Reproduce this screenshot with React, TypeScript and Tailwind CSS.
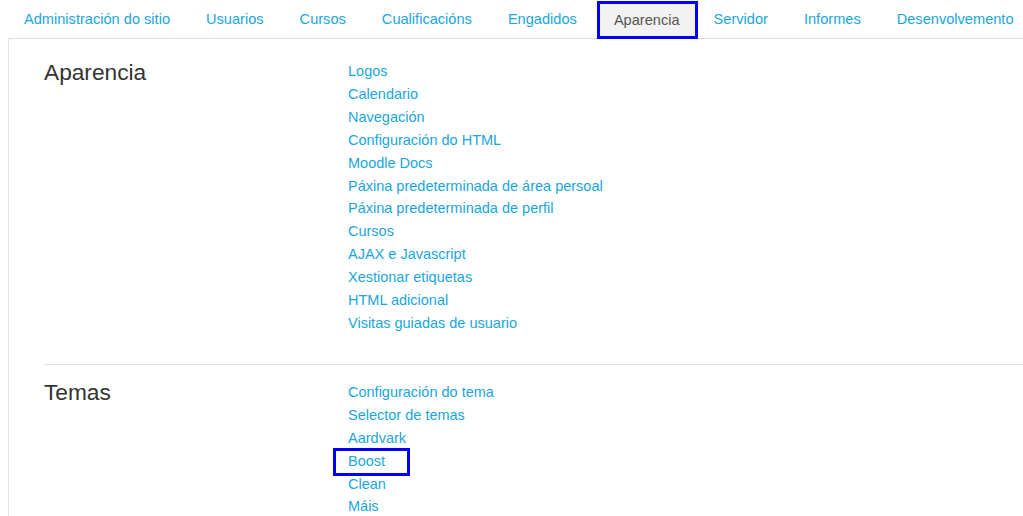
import React from "react";

const tabs = [
  "Administración do sitio",
  "Usuarios",
  "Cursos",
  "Cualificacións",
  "Engadidos",
  "Aparencia",
  "Servidor",
  "Informes",
  "Desenvolvemento",
];

const aparencia = [
  "Logos",
  "Calendario",
  "Navegación",
  "Configuración do HTML",
  "Moodle Docs",
  "Páxina predeterminada de área persoal",
  "Páxina predeterminada de perfil",
  "Cursos",
  "AJAX e Javascript",
  "Xestionar etiquetas",
  "HTML adicional",
  "Visitas guiadas de usuario",
];

const temas = ["Configuración do tema", "Selector de temas", "Aardvark", "Boost", "Clean", "Máis"];

export default function App() {
  return (
    <div
      className="w-[1023px] h-[516px] overflow-hidden bg-white relative"
      style={{ fontFamily: "'Liberation Sans', Arial, sans-serif" }}
    >
      <ul className="flex items-end h-[39px] ml-[8px] border-b border-[#dedede] text-[14.6px] whitespace-nowrap">
        {tabs.map((t) => {
          const active = t === "Aparencia";
          return active ? (
            <li key={t} className="relative mr-[1px]">
              <div className="relative h-[37px] px-[16px] pt-[1px] flex items-center bg-[#f2f2f2] border border-b-0 border-[#dddddd] text-[#555555]">
                {t}
                <div className="absolute left-[-1px] right-[-2px] top-[-1px] bottom-[-1px] border-[3px] border-[#0000ff]" />
              </div>
            </li>
          ) : (
            <li key={t} className="relative mr-[4px]">
              <div className="h-[37px] px-[16px] pt-[1px] flex items-center text-[#1aa6dd]">{t}</div>
            </li>
          );
        })}
      </ul>
      <div className="ml-[8px] border-l border-[#e6e6e6] h-[477px] pl-[35px] pt-[21px]">
        <div className="flex">
          <h2 className="w-[304px] text-[22.7px] leading-[24px] text-[#333333]">Aparencia</h2>
          <ul className="text-[14.5px] leading-[22.9px] text-[#1aa6dd]">
            {aparencia.map((l) => (
              <li key={l}>{l}</li>
            ))}
          </ul>
        </div>
        <div className="mt-[29px] border-t border-[#e3e3e3] h-0" />
        <div className="flex pt-[16px]">
          <h2 className="w-[304px] text-[22.7px] leading-[20px] text-[#333333] pt-[1px]">Temas</h2>
          <ul className="text-[14.5px] leading-[22.9px] text-[#1aa6dd]">
            {temas.map((l) => (
              <li key={l} className="relative">
                {l}
                {l === "Boost" && (
                  <div className="absolute left-[-15px] top-[-2px] w-[77px] h-[28px] border-[3px] border-[#0000ff]" />
                )}
              </li>
            ))}
          </ul>
        </div>
      </div>
    </div>
  );
}
